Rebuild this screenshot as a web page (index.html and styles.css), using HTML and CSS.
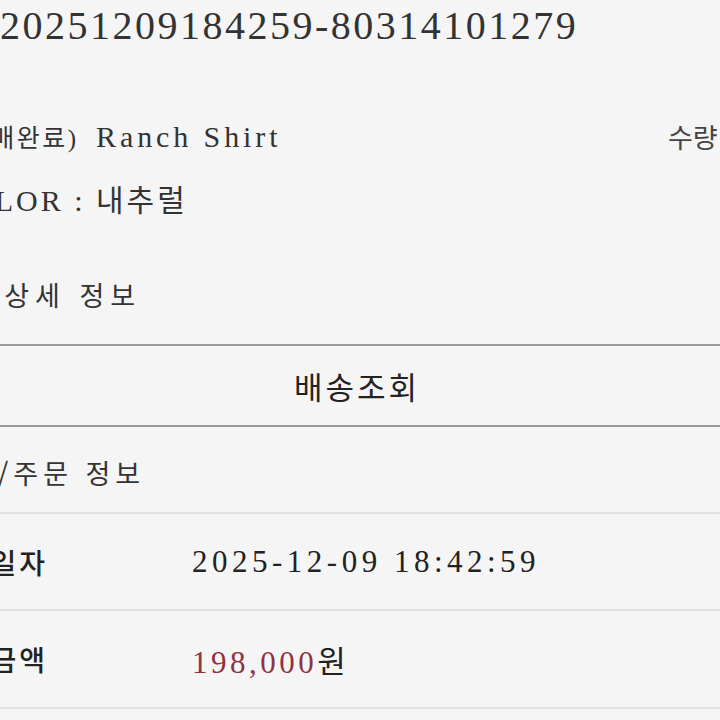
FILE: index.html
```html
<!DOCTYPE html>
<html lang="ko">
<head>
  <meta charset="UTF-8" />
  <meta name="viewport" content="width=device-width, initial-scale=1.0"/>
  <title>주문 상세</title>
  <link rel="stylesheet" href="styles.css">
</head>
<body>
  <div class="page">
    <div class="order-no">20251209184259-80314101279</div>

    <div class="item">
      <div class="item-info">
        <p class="item-name"><span class="item-tag">(판매완료)</span> Ranch Shirt</p>
        <p class="item-opt">COLOR : 내추럴</p>
      </div>
      <div class="item-qty">수량 1개</div>
    </div>

    <h3 class="section-title detail-title">주문 상세 정보</h3>

    <button class="track-btn" type="button">배송조회</button>

    <h3 class="section-title pay-title">결제/주문 정보</h3>

    <div class="info-list">
      <div class="info-row">
        <span class="info-label">주문일자</span>
        <span class="info-value">2025-12-09 18:42:59</span>
      </div>
      <div class="info-row">
        <span class="info-label">결제금액</span>
        <span class="info-value"><em class="price">198,000</em>원</span>
      </div>
    </div>
  </div>
</body>
</html>
```

FILE: styles.css
```css
* {
  margin: 0;
  padding: 0;
  box-sizing: border-box;
}

body {
  background: #f5f5f5;
  color: #2b2b2b;
  font-family: "Liberation Serif", "Noto Sans CJK KR", serif;
  overflow: hidden;
}

.page {
  width: 804px;
  margin-left: -45px;
}

.order-no {
  padding: 4px 0 0 45px;
  font-size: 40px;
  line-height: 44px;
  letter-spacing: 2.5px;
  color: #333;
  white-space: nowrap;
}

.item {
  display: flex;
  margin-top: 71px;
}

.item-info {
  flex: 1;
}

.item-name,
.item-opt {
  font-size: 30px;
  line-height: 36px;
  letter-spacing: 3.9px;
  color: #333;
  white-space: nowrap;
}

.item-tag {
  font-size: 25px;
  letter-spacing: 2.5px;
  margin-right: 6px;
}

.item-opt {
  margin: 26px 0 0 -8px;
  letter-spacing: 3px;
}

.item-qty {
  flex: none;
  width: 91px;
  font-family: "Noto Sans CJK KR", sans-serif;
  font-size: 27px;
  line-height: 36px;
  color: #444;
  white-space: nowrap;
}

.section-title {
  font-family: "Noto Sans CJK KR", sans-serif;
  font-weight: 400;
  font-size: 27px;
  line-height: 36px;
  letter-spacing: 6px;
  color: #333;
  white-space: nowrap;
}

.detail-title {
  margin: 58px 0 31px -26px;
}

.track-btn {
  display: block;
  width: 100%;
  height: 83px;
  border: none;
  border-top: 2px solid #9a9a9a;
  border-bottom: 2px solid #9a9a9a;
  background: none;
  font-family: "Noto Sans CJK KR", sans-serif;
  font-size: 31px;
  letter-spacing: 3px;
  color: #222;
}

.pay-title {
  padding: 28px 0 21px;
  margin-left: -17px;
  letter-spacing: 5px;
}

.info-row {
  display: grid;
  grid-template-columns: 237px 1fr;
  align-items: center;
  height: 97px;
  border-top: 2px solid #e2e2e2;
}

.info-row:last-child {
  height: 100px;
  border-bottom: 2px solid #e2e2e2;
}

.info-label {
  margin-left: -22px;
  font-family: "Noto Sans CJK KR", sans-serif;
  font-weight: 500;
  font-size: 28px;
  letter-spacing: 3px;
  color: #222;
  white-space: nowrap;
}

.info-value {
  font-family: "Liberation Serif", "Noto Sans CJK KR", serif;
  font-size: 31px;
  letter-spacing: 4.5px;
  color: #222;
  white-space: nowrap;
}

.price {
  font-style: normal;
  letter-spacing: 3.5px;
  color: #8f3242;
}
```
